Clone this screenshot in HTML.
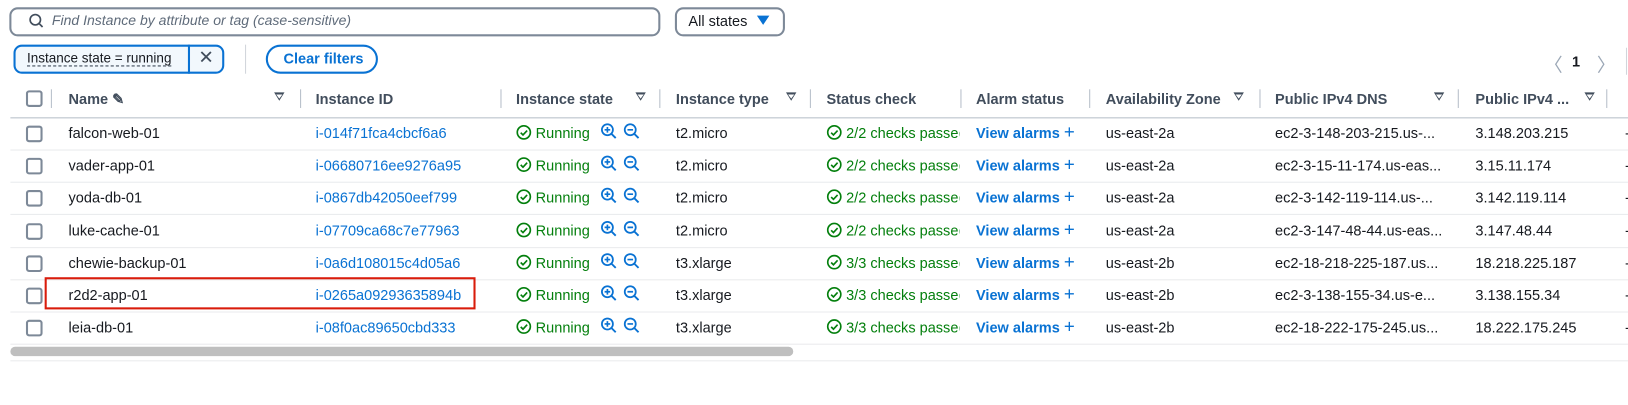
<!DOCTYPE html><html><head><style>
body{margin:0;width:1628px;height:403px;background:#fff;font-family:"Liberation Sans",sans-serif;font-size:14px;color:#16191f;position:relative;overflow:hidden}
#w{position:absolute;left:0;top:0;width:1568px;height:390px;transform:scale(1.0383);transform-origin:0 0}
.a{position:absolute;white-space:nowrap}
.cb{position:absolute;left:25px;width:12px;height:12px;border:2px solid #7d8998;border-radius:3px}
.hd{font-weight:bold;color:#414d5c}
.dv{position:absolute;top:86px;height:18px;width:1px;background:#b6bec9}
.ft{position:absolute;top:89px;width:0;height:0;border-left:5px solid transparent;border-right:5px solid transparent;border-top:8px solid #414d5c}
.ft:after{content:"";position:absolute;left:-3px;top:-6.5px;border-left:3px solid transparent;border-right:3px solid transparent;border-top:4.5px solid #fff}
.ln{position:absolute;left:10px;width:1618px;height:1px;background:#e9ebed}
.blue{color:#0972d3}.green{color:#037f0c}
</style></head><body><div id="w">
<div class="a" style="left:9px;top:7px;width:623px;height:24px;border:2px solid #7d8998;border-radius:8px"></div>
<svg class="a" style="left:27px;top:12px" width="16" height="16"><circle cx="7" cy="7" r="5" fill="none" stroke="#414d5c" stroke-width="1.6"/><line x1="11" y1="11" x2="14" y2="14" stroke="#414d5c" stroke-width="1.6"/></svg>
<div class="a" style="left:50px;top:12px;font-style:italic;color:#5f6b7a;font-size:13.5px">Find Instance by attribute or tag (case-sensitive)</div>
<div class="a" style="left:650px;top:7px;width:102px;height:24px;border:2px solid #7d8998;border-radius:8px"></div>
<div class="a" style="left:663px;top:12px">All states</div>
<div class="a" style="left:729px;top:15px;border-left:6px solid transparent;border-right:6px solid transparent;border-top:9px solid #0972d3;width:0;height:0"></div>
<div class="a" style="left:13px;top:43px;width:199px;height:24px;border:2px solid #0972d3;border-radius:8px;background:#f2f8fd"></div>
<div class="a" style="left:181px;top:43px;width:2px;height:28px;background:#0972d3"></div>
<div class="a" style="left:26px;top:48px;font-size:13px;border-bottom:1px dashed #414d5c">Instance state = running</div>
<div class="a" style="left:191px;top:45px;font-size:18px;color:#414d5c">✕</div>
<div class="a" style="left:236px;top:43px;width:1px;height:28px;background:#d1d5db"></div>
<div class="a" style="left:256px;top:43px;width:104px;height:24px;border:2px solid #0972d3;border-radius:14px"></div>
<div class="a" style="left:273px;top:48px;font-weight:bold;color:#0972d3">Clear filters</div>
<div class="a" style="left:1487px;top:49px;font-size:18px;color:#9ba7b6">〈</div>
<div class="a" style="left:1514px;top:51px;font-weight:bold">1</div>
<div class="a" style="left:1538px;top:49px;font-size:18px;color:#9ba7b6">〉</div>
<div class="a" style="left:1566px;top:46px;width:1px;height:26px;background:#d1d5db"></div>
<div class="cb" style="top:87px"></div>
<div class="dv" style="left:49px"></div>
<div class="a hd" style="left:66px;top:87px">Name ✎</div><div class="ft" style="left:264px"></div><div class="dv" style="left:289px"></div>
<div class="a hd" style="left:304px;top:87px">Instance ID</div><div class="dv" style="left:482px"></div>
<div class="a hd" style="left:497px;top:87px">Instance state</div><div class="ft" style="left:612px"></div><div class="dv" style="left:635px"></div>
<div class="a hd" style="left:651px;top:87px">Instance type</div><div class="ft" style="left:757px"></div><div class="dv" style="left:780px"></div>
<div class="a hd" style="left:796px;top:87px">Status check</div><div class="dv" style="left:925px"></div>
<div class="a hd" style="left:940px;top:87px">Alarm status</div><div class="dv" style="left:1049px"></div>
<div class="a hd" style="left:1065px;top:87px">Availability Zone</div><div class="ft" style="left:1188px"></div><div class="dv" style="left:1213px"></div>
<div class="a hd" style="left:1228px;top:87px">Public IPv4 DNS</div><div class="ft" style="left:1381px"></div><div class="dv" style="left:1404px"></div>
<div class="a hd" style="left:1421px;top:87px">Public IPv4 ...</div><div class="ft" style="left:1526px"></div><div class="dv" style="left:1547px"></div>
<div class="ln" style="top:113px;background:#b6bec9"></div>
<div id="rows"></div>
<div class="a" style="left:10px;top:334px;width:754px;height:9px;border-radius:5px;background:#bfbfbf"></div>
<div class="ln" style="top:347px"></div>
<div class="a" style="left:43px;top:267px;width:411px;height:27px;border:2px solid #d91c0b"></div>
</div>
<script>
var R=[["falcon-web-01","i-014f71fca4cbcf6a6","t2.micro","2/2","us-east-2a","ec2-3-148-203-215.us-...","3.148.203.215"],
["vader-app-01","i-06680716ee9276a95","t2.micro","2/2","us-east-2a","ec2-3-15-11-174.us-eas...","3.15.11.174"],
["yoda-db-01","i-0867db42050eef799","t2.micro","2/2","us-east-2a","ec2-3-142-119-114.us-...","3.142.119.114"],
["luke-cache-01","i-07709ca68c7e77963","t2.micro","2/2","us-east-2a","ec2-3-147-48-44.us-eas...","3.147.48.44"],
["chewie-backup-01","i-0a6d108015c4d05a6","t3.xlarge","3/3","us-east-2b","ec2-18-218-225-187.us...","18.218.225.187"],
["r2d2-app-01","i-0265a09293635894b","t3.xlarge","3/3","us-east-2b","ec2-3-138-155-34.us-e...","3.138.155.34"],
["leia-db-01","i-08f0ac89650cbd333","t3.xlarge","3/3","us-east-2b","ec2-18-222-175-245.us...","18.222.175.245"]];
var chk='<svg width="15" height="15" style="vertical-align:-2px"><circle cx="7.5" cy="7.5" r="6.3" fill="none" stroke="#037f0c" stroke-width="1.6"/><path d="M4.5 7.8l2.2 2.2 4-4.3" fill="none" stroke="#037f0c" stroke-width="1.6"/></svg>';
function mg(p){return '<svg width="17" height="17"><circle cx="7" cy="7" r="5.3" fill="none" stroke="#0972d3" stroke-width="1.7"/><line x1="11" y1="11" x2="15" y2="15" stroke="#0972d3" stroke-width="1.8"/><line x1="4.3" y1="7" x2="9.7" y2="7" stroke="#0972d3" stroke-width="1.6"/>'+(p?'<line x1="7" y1="4.3" x2="7" y2="9.7" stroke="#0972d3" stroke-width="1.6"/>':'')+'</svg>';}
var h='';R.forEach(function(r,i){var y=118+i*31.2,t=y+2;
h+='<div class="cb" style="top:'+(y+3)+'px"></div>';
h+='<div class="a" style="left:66px;top:'+t+'px">'+r[0]+'</div>';
h+='<div class="a blue" style="left:304px;top:'+t+'px">'+r[1]+'</div>';
h+='<div class="a green" style="left:497px;top:'+t+'px">'+chk+' Running</div>';
h+='<div class="a" style="left:578px;top:'+(y)+'px">'+mg(1)+'</div><div class="a" style="left:600px;top:'+y+'px">'+mg(0)+'</div>';
h+='<div class="a" style="left:651px;top:'+t+'px">'+r[2]+'</div>';
h+='<div class="a green" style="left:796px;top:'+t+'px;width:128px;overflow:hidden">'+chk+' '+r[3]+' checks passed</div>';
h+='<div class="a blue" style="left:940px;top:'+t+'px;font-weight:bold">View alarms <span style="font-weight:normal;font-size:18px;line-height:14px">+</span></div>';
h+='<div class="a" style="left:1065px;top:'+t+'px">'+r[4]+'</div>';
h+='<div class="a" style="left:1228px;top:'+t+'px">'+r[5]+'</div>';
h+='<div class="a" style="left:1421px;top:'+t+'px">'+r[6]+'</div>';
h+='<div class="a" style="left:1565px;top:'+t+'px">-</div>';
h+='<div class="ln" style="top:'+(y+26)+'px"></div>';});
document.getElementById('rows').innerHTML=h;
</script>
</body></html>
